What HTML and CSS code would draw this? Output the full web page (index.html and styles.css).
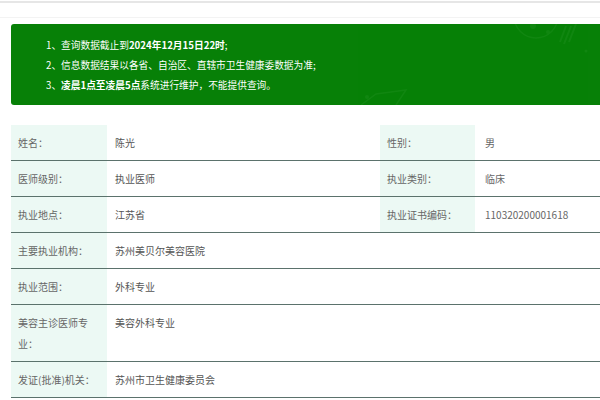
FILE: index.html
```html
<!DOCTYPE html>
<html lang="zh">
<head>
<meta charset="utf-8">
<link rel="stylesheet" href="styles.css">
</head>
<body>
<div class="topbar"></div>
<div class="notice">
  <svg class="deco" width="589" height="81" viewBox="0 0 589 81">
    <circle cx="525" cy="-8" r="22" fill="none" stroke="#2a952a" stroke-width="1.5"/>
    <circle cx="522" cy="2" r="3" fill="#2a952a"/>
    <circle cx="537" cy="8" r="2" fill="#2a952a"/>
    <path d="M555 2 L549 18 M560 2 L553 20 M565 0 L558 18" stroke="#2a952a" stroke-width="2"/>
    <circle cx="575" cy="27" r="1.5" fill="#2a952a"/>
    <path d="M350 81 L365 70 L395 66 L385 81" fill="none" stroke="#2a952a" stroke-width="1.5"/>
    <circle cx="356" cy="73" r="2" fill="#2a952a"/>
  </svg>
  <p>1、查询数据截止到<b>2024年12月15日22时</b>;</p>
  <p>2、信息数据结果以各省、自治区、直辖市卫生健康委数据为准;</p>
  <p>3、<b>凌晨1点至凌晨5点</b>系统进行维护，不能提供查询。</p>
</div>
<div class="info">
  <div class="row">
    <div class="lbl">姓名：</div><div class="val">陈光</div>
    <div class="lbl">性别：</div><div class="val val2">男</div>
  </div>
  <div class="row">
    <div class="lbl">医师级别：</div><div class="val">执业医师</div>
    <div class="lbl">执业类别：</div><div class="val val2">临床</div>
  </div>
  <div class="row">
    <div class="lbl">执业地点：</div><div class="val">江苏省</div>
    <div class="lbl">执业证书编码：</div><div class="val val2">110320200001618</div>
  </div>
  <div class="row wide">
    <div class="lbl">主要执业机构：</div><div class="val">苏州美贝尔美容医院</div>
  </div>
  <div class="row wide">
    <div class="lbl">执业范围：</div><div class="val">外科专业</div>
  </div>
  <div class="row wide">
    <div class="lbl">美容主诊医师专业：</div><div class="val">美容外科专业</div>
  </div>
  <div class="row wide">
    <div class="lbl">发证(批准)机关：</div><div class="val">苏州市卫生健康委员会</div>
  </div>
</div>
</body>
</html>
```
FILE: styles.css
```css
* { box-sizing: border-box; }
body {
  margin: 0;
  background: #fff;
  font-family: "Microsoft YaHei", "Noto Sans CJK SC", sans-serif;
  font-size: 10px;
  overflow: hidden;
}
.topbar {
  margin-top: 1px;
  height: 17px;
  border-top: 2px solid #e6e6e6;
  border-bottom: 1px solid #f3f3f3;
}
.notice {
  position: relative;
  margin: 6px 0 0 11px;
  height: 81px;
  padding: 11px 0 10px 35px;
  background: #078007;
  border-radius: 3px 0 0 3px;
  color: #fff;
  font-size: 9.7px;
  overflow: hidden;
}
.notice p {
  position: relative;
  margin: 0;
  line-height: 20px;
}
.notice b { font-weight: bold; }
.deco {
  position: absolute;
  left: 0;
  top: 0;
  opacity: 0.3;
}
.info {
  margin: 20px 0 0 11px;
}
.row {
  display: grid;
  grid-template-columns: 96px 273px 95px 1fr;
  border-bottom: 1px solid #5b726c;
}
.row.wide {
  grid-template-columns: 96px 1fr;
}
.lbl {
  background: #ecf9f4;
  color: #666;
  padding: 7px 12px 7px 7px;
  line-height: 21px;
}
.val {
  color: #555;
  padding: 7px 8px;
  line-height: 21px;
}
.val2 { padding-left: 10px; color: #666; }
```
